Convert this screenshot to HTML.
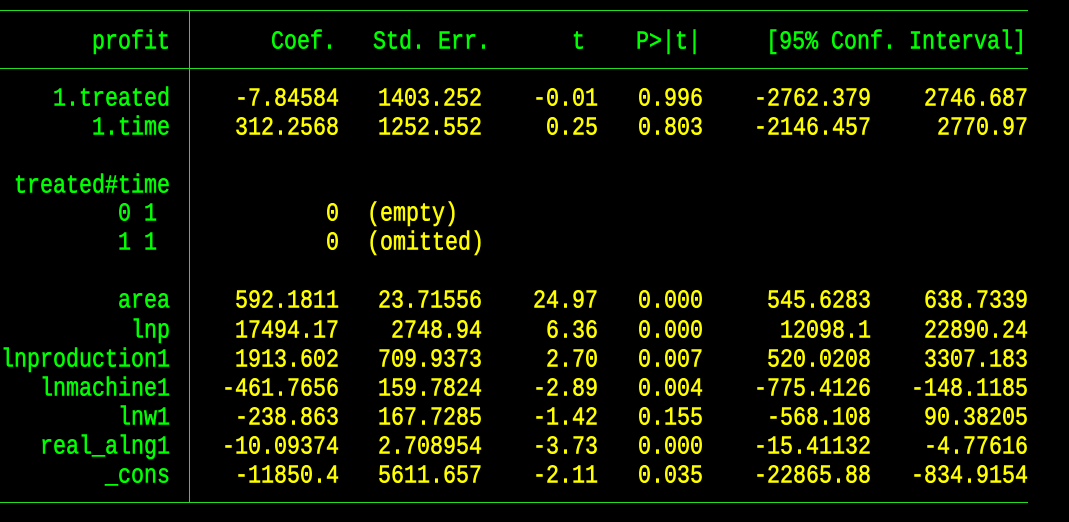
<!DOCTYPE html>
<html><head><meta charset="utf-8"><style>
html,body{margin:0;padding:0;background:#000;width:1069px;height:522px;overflow:hidden;position:relative}
.t{position:absolute;font-family:"Liberation Mono",monospace;font-size:21.67px;font-weight:normal;-webkit-text-stroke:0.5px currentColor;line-height:29px;white-space:pre;height:29px;transform:scaleY(1.18);transform-origin:50% 55%}
.g{color:#00ff00}.y{color:#ffff00}
.l{position:absolute;background:#22dd22}
</style></head><body>
<div class="l" style="left:0;top:10px;width:1028px;height:1px"></div>
<div class="l" style="left:0;top:68px;width:1028px;height:1px"></div>
<div class="l" style="left:0;top:502px;width:1028px;height:1px"></div>
<div class="l" style="left:189px;top:10px;width:1px;height:493px"></div>
<div id="c"></div>
<script>
var c=document.getElementById('c'),h='';
function s(txt,right,y,cls){h+='<div class="t '+cls+'" style="right:'+(1069-right)+'px;top:'+(y-13.5)+'px">'+txt+'</div>';}
function sl(txt,left,y,cls){h+='<div class="t '+cls+'" style="left:'+left+'px;top:'+(y-13.5)+'px">'+txt+'</div>';}
s('profit',170,41,'g');s('Coef.',336,41,'g');s('Std. Err.',490,41,'g');s('t',585,41,'g');s('P&gt;|t|',701,41,'g');s('[95% Conf. Interval]',1026,41,'g');
var R=[[98,'1.treated','-7.84584','1403.252','-0.01','0.996','-2762.379','2746.687'],
[127,'1.time','312.2568','1252.552','0.25','0.803','-2146.457','2770.97'],
[300,'area','592.1811','23.71556','24.97','0.000','545.6283','638.7339'],
[330,'lnp','17494.17','2748.94','6.36','0.000','12098.1','22890.24'],
[359,'lnproduction1','1913.602','709.9373','2.70','0.007','520.0208','3307.183'],
[388,'lnmachine1','-461.7656','159.7824','-2.89','0.004','-775.4126','-148.1185'],
[417,'lnw1','-238.863','167.7285','-1.42','0.155','-568.108','90.38205'],
[446,'real_alng1','-10.09374','2.708954','-3.73','0.000','-15.41132','-4.77616'],
[475,'_cons','-11850.4','5611.657','-2.11','0.035','-22865.88','-834.9154']];
var X=[170,339,482,598,703,871,1028];
R.forEach(function(r){s(r[1],X[0],r[0],'g');for(var i=2;i<8;i++)s(r[i],X[i-1],r[0],'y');});
s('treated#time',170,185,'g');s('0 1',157,213,'g');s('1 1',157,242,'g');
s('0',339,213,'y');s('0',339,242,'y');sl('(empty)',367,213,'y');sl('(omitted)',367,242,'y');
c.innerHTML=h;
</script>
</body></html>
